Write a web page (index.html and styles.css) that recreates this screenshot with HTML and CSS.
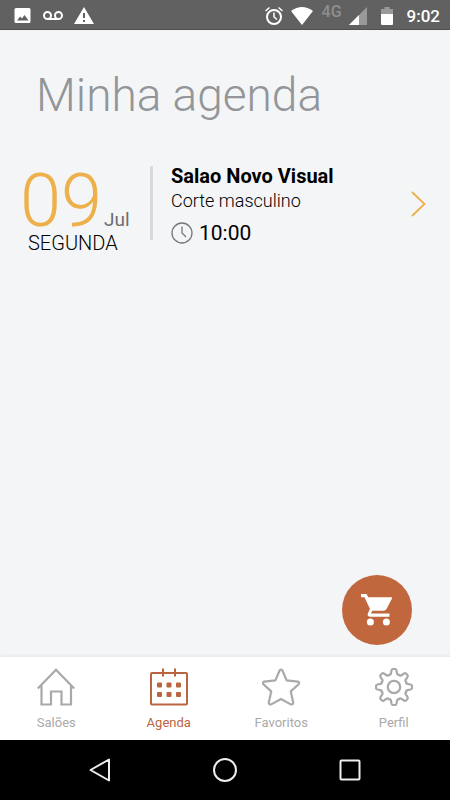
FILE: index.html
```html
<!DOCTYPE html>
<html lang="pt-BR">
<head>
<meta charset="utf-8">
<meta name="viewport" content="width=device-width, initial-scale=1">
<title>Minha agenda</title>
<link rel="stylesheet" href="styles.css">
</head>
<body>
<div class="status">
  <div class="status-group notices">
    <svg width="18" height="18" viewBox="0 0 18 18"><path fill="#fff" fill-rule="evenodd" d="M2 1h13q1.500 0 1.500 1.500v12q0 1.500-1.500 1.500H2Q.500 16 .500 14.500v-12Q.500 1 2 1ZM3 13.500h11.500L10.500 8 8 11.500 6 9.500Z"/></svg>
    <svg width="20" height="18" viewBox="0 0 20 18" fill="none" stroke="#fff" stroke-width="2"><circle cx="4.500" cy="8.500" r="3.500"/><circle cx="15.500" cy="8.500" r="3.500"/><path d="M4.500 12h11"/></svg>
    <svg width="20" height="18" viewBox="0 0 20 18"><path fill="#fff" fill-rule="evenodd" d="M10 0 20 17H0ZM9 6v5h2V6ZM9 13v2h2v-2Z"/></svg>
  </div>
  <div class="status-group">
    <svg width="20" height="20" viewBox="0 0 20 20" fill="none" stroke="#fff" stroke-width="2"><circle cx="10" cy="11" r="7"/><path stroke-width="1.500" d="M10 6.500V11l3 2.500M1.500 5 5.500 1.500M18.500 5l-4-3.500"/></svg>
    <svg class="wifi" width="22" height="18" viewBox="0 0 22 18"><path fill="#fff" d="M0 4Q11-4 22 4L11 18Z"/></svg>
    <span class="network">4G</span>
    <svg class="signal" width="18" height="18" viewBox="0 0 18 18"><path fill="#999" d="M18 0v18H0Z"/><path fill="#fff" d="M10 8v10H0Z"/></svg>
    <svg class="battery" width="12" height="18" viewBox="0 0 12 18"><path fill="#999" d="M3.500 0h5v2H12v6H0V2h3.500Z"/><path fill="#fff" d="M0 7h12v10q0 1-1 1H1q-1 0-1-1Z"/></svg>
    <time class="clock">9:02</time>
  </div>
</div>

<main class="screen">
  <h1 class="title">Minha agenda</h1>
  <a class="booking" href="#agendamento">
    <div class="date">
      <div class="date-line"><span class="day">09</span><span class="month">Jul</span></div>
      <div class="weekday">SEGUNDA</div>
    </div>
    <div class="divider"></div>
    <div class="details">
      <h2 class="salon">Salao Novo Visual</h2>
      <p class="service">Corte masculino</p>
      <div class="hour">
        <svg width="22" height="22" viewBox="0 0 22 22" fill="none" stroke="#777"><circle cx="11" cy="11" r="10" stroke-width="1.300"/><path stroke-width="1.300" d="M11 4.500V11l4 4"/></svg>
        <time>10:00</time>
      </div>
    </div>
    <svg class="arrow" width="16" height="26" viewBox="0 0 16 26" fill="none" stroke="#edb04b" stroke-width="1.800"><path d="M2 1 14.500 13 2 25"/></svg>
  </a>
  <button class="cart" type="button" aria-label="Carrinho">
    <svg width="34" height="34" viewBox="0 0 34 34"><path fill="#fff" d="M1 1h5.500l1.800 3.200H31q1.500 0 1 1.400L26.500 16q-1 1.800-3 1.800H12.300L10.800 20.500h18.700v3.200H10.500Q7 23.700 7.800 20.500L10 16 4.500 4.200H1Z"/><circle cx="10.400" cy="29" r="3.500" fill="#fff"/><circle cx="26.400" cy="29" r="3.500" fill="#fff"/></svg>
  </button>
</main>

<nav class="tabs">
  <a class="tab" href="#saloes">
    <svg width="38" height="38" viewBox="0 0 38 38" fill="none" stroke="currentColor" stroke-width="2.200"><path d="M.800 20.500 19 1.800l18.200 18.700M4.500 17v19.500H14V23.500H24.500V36.500H34V17"/></svg>
    <span>Salões</span>
  </a>
  <a class="tab active" href="#agenda" aria-current="page">
    <svg width="38" height="38" viewBox="0 0 38 38"><g fill="none" stroke="currentColor" stroke-width="2"><rect x="1" y="5" width="36" height="31.500" rx="1"/><path d="M13 .500V8.500M25 .500V8.500"/></g><g fill="currentColor"><rect x="7" y="14.500" width="5" height="5" rx="1"/><rect x="16.500" y="14.500" width="5" height="5" rx="1"/><rect x="26" y="14.500" width="5" height="5" rx="1"/><rect x="7" y="24" width="5" height="5" rx="1"/><rect x="16.500" y="24" width="5" height="5" rx="1"/><rect x="26" y="24" width="5" height="5" rx="1"/></g></svg>
    <span>Agenda</span>
  </a>
  <a class="tab" href="#favoritos">
    <svg width="38" height="38" viewBox="0 0 38 38" fill="none" stroke="currentColor" stroke-width="2.200" stroke-linejoin="round"><path d="M17.600 2.500Q19 .500 20.400 2.500L24.600 12.400 35.800 13.600Q38 14.400 36.600 16.200L28.800 23.400 31.200 34.500Q31.200 37 28.800 36.400L19 31 9.200 36.400Q6.800 37 6.800 34.500L9.200 23.400 1.400 16.200Q0 14.400 2.200 13.600L13.400 12.400Z"/></svg>
    <span>Favoritos</span>
  </a>
  <a class="tab" href="#perfil">
    <svg width="38" height="38" viewBox="-19 -19 38 38" fill="none" stroke="currentColor" stroke-width="2.200" stroke-linecap="round">
      <defs><path id="tooth" d="M-5-12.200C-4-11.900-3.300-12.500-3.100-13.500L-2.500-16.500Q-2.100-18-1-18H1Q2.100-18 2.500-16.500L3.100-13.500C3.300-12.500 4-11.900 5-12.200"/></defs>
      <use href="#tooth"/><use href="#tooth" transform="rotate(45)"/><use href="#tooth" transform="rotate(90)"/><use href="#tooth" transform="rotate(135)"/><use href="#tooth" transform="rotate(180)"/><use href="#tooth" transform="rotate(225)"/><use href="#tooth" transform="rotate(270)"/><use href="#tooth" transform="rotate(315)"/>
      <circle r="6.200"/>
    </svg>
    <span>Perfil</span>
  </a>
</nav>

<div class="system">
  <button type="button" aria-label="Voltar"><svg width="26" height="26" viewBox="0 0 26 26"><path d="M22 2.500v21L3.500 13Z"/></svg></button>
  <button type="button" aria-label="Início"><svg width="26" height="26" viewBox="0 0 26 26"><circle cx="13" cy="13" r="11"/></svg></button>
  <button type="button" aria-label="Recentes"><svg width="26" height="26" viewBox="0 0 26 26"><rect x="3.500" y="3.500" width="19" height="19" rx="1"/></svg></button>
</div>
</body>
</html>
```
FILE: styles.css
```css
* {
  box-sizing: border-box;
}

body {
  margin: 0;
  min-height: 100vh;
  display: flex;
  flex-direction: column;
  background: #f4f5f7;
  color: #000;
  font-family: Roboto, "Liberation Sans", sans-serif;
}

h1, h2, p {
  margin: 0;
}

a {
  color: inherit;
  text-decoration: none;
}

button {
  border: 0;
  padding: 0;
  background: none;
}

svg {
  display: block;
  flex: none;
}

.status {
  display: flex;
  justify-content: space-between;
  height: 30px;
  padding: 2px 10px 0 14px;
  background: #616161;
  border-bottom: 1px solid #505050;
  color: #fff;
}

.status-group {
  display: flex;
  align-items: center;
}

.notices {
  gap: 11px;
}

.wifi {
  margin-left: 7px;
}

.network {
  align-self: flex-start;
  margin: 2px 7px 0 9px;
  color: #8f8f8f;
  font-size: 16px;
  font-weight: 500;
  line-height: 16px;
}

.battery {
  margin: 0 14px;
}

.clock {
  font-size: 17px;
  font-weight: 500;
}

.screen {
  position: relative;
  flex: 1;
  padding: 37px 24px 0;
}

.title {
  padding-left: 12px;
  color: #939598;
  font-size: 46px;
  font-weight: 300;
  line-height: 56px;
}

.booking {
  display: flex;
  align-items: flex-start;
  margin-top: 43px;
}

.date {
  width: 126px;
}

.date-line {
  display: flex;
  align-items: baseline;
  gap: 2px;
  height: 65px;
  line-height: 70px;
}

.day {
  margin-left: -4px;
  color: #edb04b;
  font-size: 74px;
  font-weight: 300;
}

.month {
  color: #6d6e71;
  font-size: 19px;
}

.weekday {
  padding-left: 4px;
  font-size: 20px;
  font-weight: 300;
  line-height: 24px;
}

.divider {
  width: 3px;
  height: 74px;
  border-radius: 1px;
  background: #d8d9db;
}

.details {
  flex: 1;
  padding-left: 18px;
}

.salon {
  font-size: 20px;
  font-weight: 700;
  line-height: 20px;
}

.service {
  margin-top: 5px;
  font-size: 18px;
  font-weight: 300;
  line-height: 20px;
}

.hour {
  display: flex;
  align-items: center;
  gap: 6px;
  margin-top: 11px;
  font-size: 21px;
  line-height: 22px;
}

.arrow {
  margin-top: 25px;
}

.cart {
  position: absolute;
  right: 38px;
  bottom: 11px;
  display: grid;
  place-items: center;
  width: 70px;
  height: 70px;
  border-radius: 50%;
  background: #c1673e;
}

.tabs {
  display: grid;
  grid-template-columns: repeat(4, 1fr);
  height: 84px;
  padding-top: 11px;
  background: #fff;
  border-top: 1px solid #e9eaeb;
  box-shadow: 0 -1px 2px #e9eaeb;
}

.tab {
  display: flex;
  flex-direction: column;
  align-items: center;
  gap: 8px;
  color: #a9a9a9;
  font-size: 13px;
  line-height: 18px;
}

.active {
  color: #bb6440;
}

.system {
  display: flex;
  justify-content: center;
  align-items: center;
  gap: 99px;
  height: 60px;
  background: #000;
}

.system svg {
  fill: none;
  stroke: #eee;
  stroke-width: 2;
  stroke-linejoin: round;
}
```
